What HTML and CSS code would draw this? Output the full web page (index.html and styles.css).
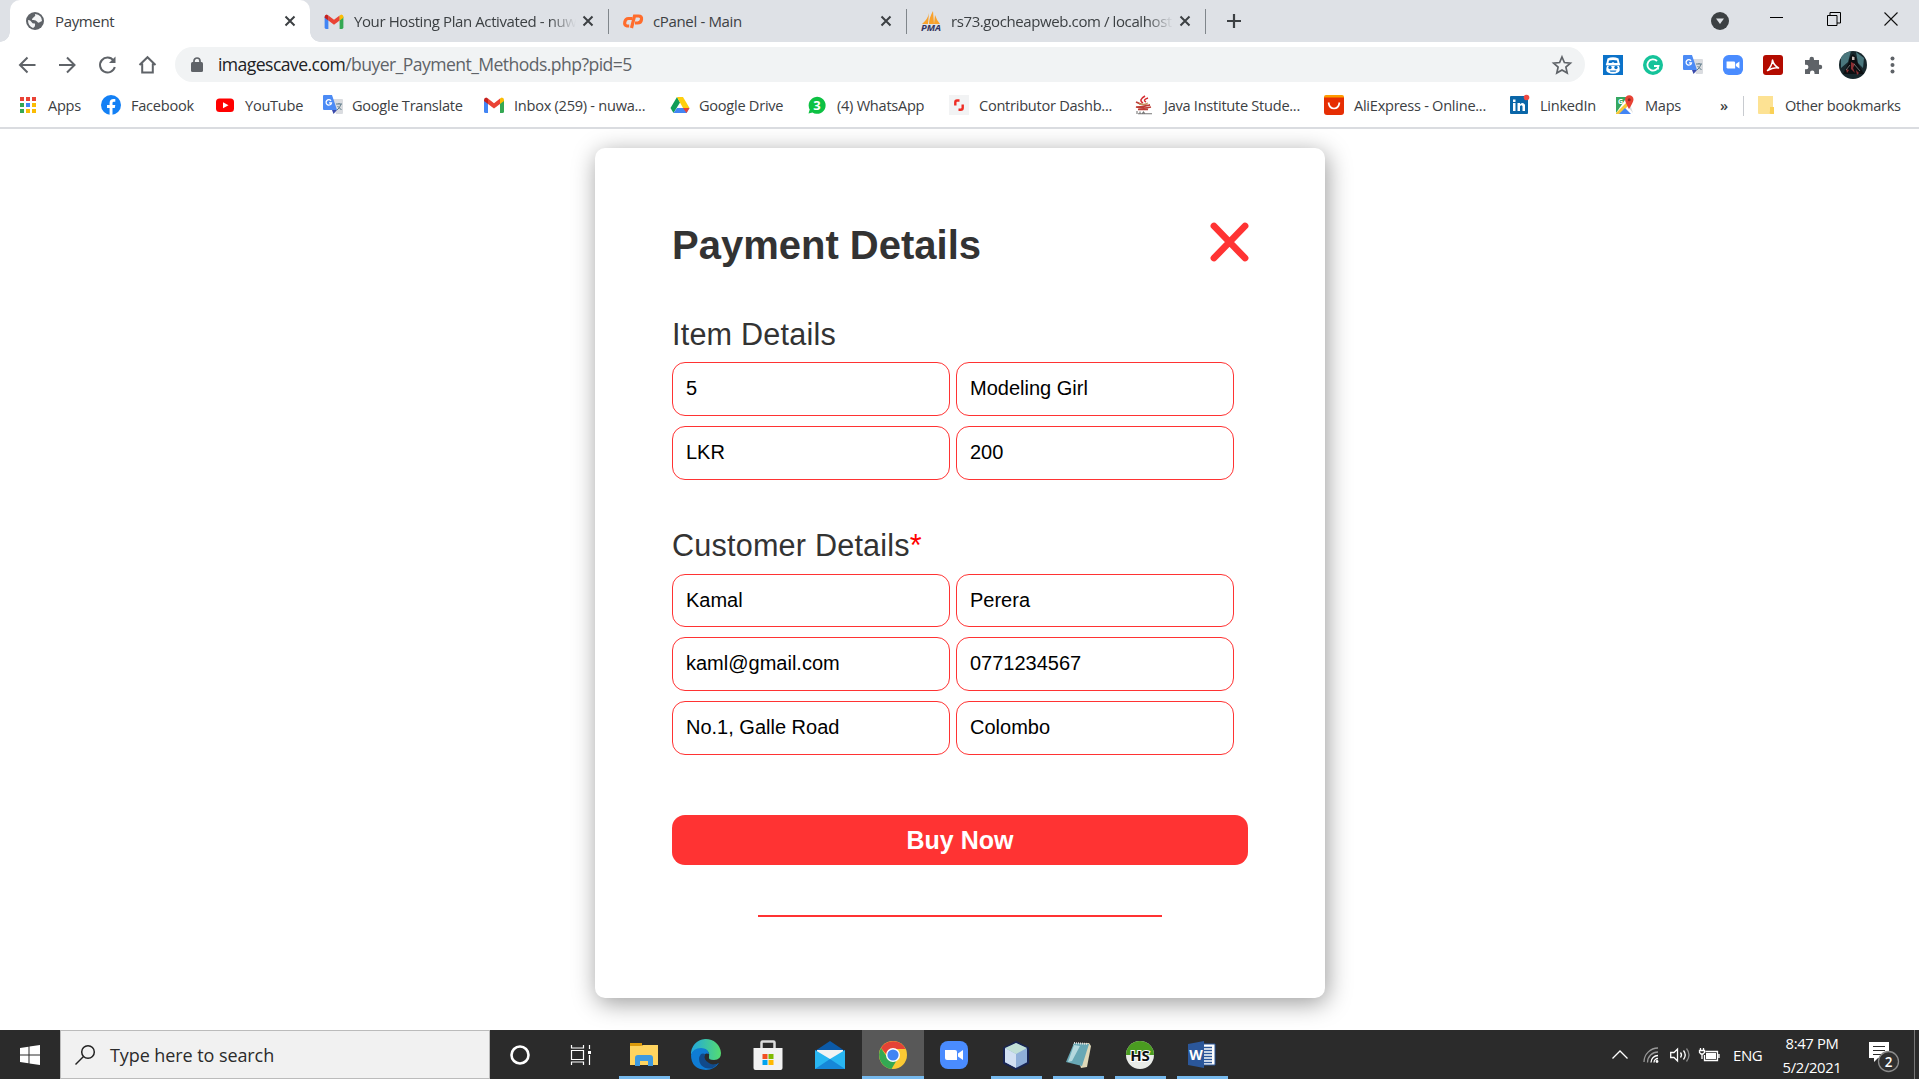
FILE: index.html
```html
<!DOCTYPE html>
<html lang="en">
<head>
<meta charset="utf-8">
<title>Payment</title>
<link rel="stylesheet" href="styles.css">
</head>
<body>
<svg class="defs" width="0" height="0" aria-hidden="true">
  <symbol id="x" viewBox="0 0 12 12"><path d="M1.500 1.500l9 9M10.500 1.500l-9 9" stroke="#3c4043" stroke-width="2" fill="none"/></symbol>
  <symbol id="gmail" viewBox="0 0 20 16"><path d="M0 3h4v13H1.500Q0 16 0 14.500z" fill="#4285f4"/><path d="M16 3h4v11.500Q20 16 18.500 16H16z" fill="#34a853"/><path d="M4 1.500l6 4.700 6-4.700v5.500l-6 4.500-6-4.500z" fill="#ea4335"/><path d="M0 3Q0 .5 2.200.4L4 1.500V7L0 4z" fill="#c5221f"/><path d="M20 3q0-2.500-2.200-2.600L16 1.500V7l4-3z" fill="#fbbc04"/></symbol>
  <symbol id="translate" viewBox="0 0 20 20"><path d="M8 4h11q1 0 1 1v13q0 1-1 1h-6z" fill="#dadce0"/><path d="M1 0h8l5 15H1q-1 0-1-1V1q0-1 1-1z" fill="#4c8bf5"/><path d="M9 15h5l-3.500 4z" fill="#3949ab"/><path d="M8 5.800A2.700 2.700 0 1 0 8.500 7.800H6" stroke="#fff" stroke-width="1.300" fill="none"/><path d="M13 9h6M16 8v1M18 9q-1 4-4 6M14.500 11l4 4" stroke="#607d8b" fill="none"/></symbol>
  <symbol id="zoom" viewBox="0 0 28 28"><rect width="28" height="28" rx="8" fill="#4a8cff"/><path d="M5 9h10q2 0 2 2v8H7q-2 0-2-2z" fill="#fff"/><path d="M18 12.500l5-3.500v10l-5-3.500z" fill="#fff"/></symbol>
</svg>
<div class="screen">
  <header class="tabs">
    <div class="tab active">
      <svg class="i18" viewBox="0 0 18 18"><circle cx="9" cy="9" r="9" fill="#5f6368"/><path d="M2 8q2.500 0 3.500 2t3.500 1.500Q9.500 15 7 16 2 14 2 8zM9 2q1 2-1 3T6 8q4-.5 5 1.500t3 .5l2-1Q16 3 9 2z" fill="#f4f5f6"/></svg>
      <span class="t-pay">Payment</span><svg class="x"><use href="#x"/></svg>
    </div>
    <div class="tab t2"><svg class="gm"><use href="#gmail"/></svg><span class="fade">Your Hosting Plan Activated - nuw</span><svg class="x"><use href="#x"/></svg></div>
    <div class="tab t3">
      <svg class="cp" viewBox="0 0 20 14"><g fill="none" stroke="#ff6c2c" stroke-width="3.200"><path d="M9.500 4.500H5.500Q2.500 4.500 1.800 8T4 12h2.200"/><path d="M8.500 14l3-12h4q3.500 0 3 3.500T14.500 9h-2.500"/></g></svg>
      <span>cPanel - Main</span><svg class="x"><use href="#x"/></svg></div>
    <div class="tab t4">
      <svg class="i20" viewBox="0 0 20 20"><path d="M8 2q-1 6-7 11h6zM12 0q-4 7-4 13h5zM14 4l-1 9h6q-3-3-5-9z" fill="#f9a12b"/><text class="pma" x="0" y="19.500" textLength="20" lengthAdjust="spacingAndGlyphs">PMA</text></svg>
      <span class="fade">rs73.gocheapweb.com / localhost</span><svg class="x"><use href="#x"/></svg></div>
    <svg class="plus" viewBox="0 0 16 16"><path d="M8 1v14M1 8h14" stroke="#3c4043" stroke-width="2.200"/></svg>
    <div class="winctl">
      <svg class="i18" viewBox="0 0 18 18"><circle cx="9" cy="9" r="9" fill="#3c4043"/><path d="M5 6.500h8L9 12z" fill="#dee1e6"/></svg>
      <svg class="w" viewBox="0 0 14 14"><path d="M0 5.500h13" stroke="#000"/></svg>
      <svg class="w" viewBox="0 0 14 14"><path d="M.5 3.500h9.500v10H.5zM3 3V.5h10.500V11H10" fill="none" stroke="#000"/></svg>
      <svg class="w" viewBox="0 0 14 14"><path d="M.5.5l13 13M13.500.5l-13 13" stroke="#111" stroke-width="1.100"/></svg>
    </div>
  </header>
  <nav class="toolbar">
    <svg class="nav" viewBox="0 0 20 20"><path d="M18.500 10H3M10.500 2.500L3 10l7.500 7.500" /></svg>
    <svg class="nav" viewBox="0 0 20 20"><path d="M2 10h15M10 2.500l7.500 7.500-7.500 7.500"/></svg>
    <svg class="nav" viewBox="0 0 20 20"><path d="M16.500 5.500A7.500 7.500 0 1 0 17.800 12"/><path d="M18.500 1.500V8H12z" fill="#5f6368" stroke="none"/></svg>
    <svg class="nav" viewBox="0 0 20 20"><path d="M2.500 10l8-7.800L18.500 10M5.200 8.500V17.500h10.600V8.500"/></svg>
    <div class="omni">
      <svg class="lock" viewBox="0 0 12 16"><rect y="5" width="12" height="10" rx="1.500" fill="#5f6368"/><path d="M3 6V4a3 3 0 0 1 6 0v2" fill="none" stroke="#5f6368" stroke-width="1.700"/></svg>
      <span class="url">imagescave.com<i>/buyer_Payment_Methods.php?pid=5</i></span>
      <svg class="star" viewBox="0 0 20 20"><path d="M10 2l2.400 5.500 6 .6-4.500 4 1.300 5.900L10 14.900 4.800 18l1.300-5.900-4.500-4 6-.6z"/></svg>
    </div>
    <div class="ext">
      <svg class="i20" viewBox="0 0 20 20"><rect width="20" height="20" fill="#0b72c9"/><path d="M4.500 3.500q5.500-2.500 11 0l1 4.500q1.500 1 0 2.500h-13q-1.500-1.500 0-2.500zM4 11h12q2 5-1 6.500-5 2.500-10 0-3-1.500-1-6.500z" fill="#fff"/><path d="M6 5.500q4-1 8 0l.5 2.500h-3L10 7 8.500 8h-3z" fill="#0b72c9"/><g fill="#0b72c9"><circle cx="7" cy="12.500" r="1.700"/><circle cx="13" cy="12.500" r="1.700"/><path d="M6.500 15.500h7l-1 1.200h-5z"/></g></svg>
      <svg class="i20" viewBox="0 0 20 20"><circle cx="10" cy="10" r="10" fill="#15c39a"/><path d="M14 6A5.600 5.600 0 1 0 15.500 11H11M15 11v3.500" fill="none" stroke="#fff" stroke-width="1.800"/></svg>
      <svg class="i20"><use href="#translate"/></svg>
      <svg class="i20"><use href="#zoom"/></svg>
      <svg class="i20" viewBox="0 0 20 20"><rect width="20" height="20" rx="3" fill="#b30b00"/><path d="M9.500 5q1 5 6 8-5-1-11 2.500Q9 11 9.500 5z" fill="none" stroke="#fff" stroke-width="1.500" stroke-linejoin="round"/></svg>
      <svg class="i20" viewBox="0 0 20 20"><path d="M2 5h4.500V4a2.200 2.200 0 0 1 4.500 0v1H16v4.800h1a2.200 2.200 0 0 1 0 4.500h-1V19h-4.500v-1.200a2.200 2.200 0 0 0-4.500 0V19H2v-4.800h1.200a2.200 2.200 0 0 0 0-4.500H2z" fill="#5f6368"/></svg>
      <svg class="ava" viewBox="0 0 28 28"><defs><clipPath id="av"><circle cx="14" cy="14" r="14"/></clipPath></defs><g clip-path="url(#av)"><path fill="#17272c" d="M0 0h28v28H0z"/><path fill="#4a777d" d="M2 3l10-3-3 11-7 6zM17 1l8 6-1 10-5-5z"/><path fill="#0c0f12" d="M14 3q4 3 4 8l7 12H4l6-12q0-5 4-8z"/><path fill="#c9bdb8" d="M13 5.500l2.500.5v3L13 9z"/><path fill="#8b2f33" d="M12 11l4 2-2 4 2 5-4-4zM7 18l3 1-2 3zM17 19l3 3-2 2z"/><path stroke="#7f8687" stroke-width=".8" d="M15 13l6 7M11 14l-4 5"/></g></svg>
      <svg class="dots" viewBox="0 0 5 18"><g fill="#5f6368"><circle cx="2.500" cy="2.500" r="2"/><circle cx="2.500" cy="9" r="2"/><circle cx="2.500" cy="15.500" r="2"/></g></svg>
    </div>
  </nav>
  <nav class="marks">
    <a class="m1"><svg viewBox="0 0 20 20"><g fill="#ea4335"><path d="M2 2h4v4H2zM8 2h4v4H8zM14 2h4v4h-4z"/></g><path fill="#34a853" d="M2 8h4v4H2zM2 14h4v4H2z"/><path fill="#4285f4" d="M8 8h4v4H8z"/><path fill="#fbbc04" d="M14 8h4v4h-4zM8 14h4v4H8zM14 14h4v4h-4z"/></svg><span>Apps</span></a>
    <a class="m2"><svg viewBox="0 0 20 20"><circle cx="10" cy="10" r="10" fill="#1380f5"/><path d="M8.600 20v-7H6v-3h2.600V8q0-4 4-4h1.700v2.700h-1.500Q11.500 6.700 11.500 8v2h2.800l-.5 3h-2.300v7z" fill="#fff"/></svg><span>Facebook</span></a>
    <a class="m3"><svg viewBox="0 0 20 20"><rect x="1" y="3.500" width="18" height="13.500" rx="3.500" fill="#f00"/><path d="M8 7.300l5.500 3L8 13.200z" fill="#fff"/></svg><span>YouTube</span></a>
    <a class="m4"><svg><use href="#translate"/></svg><span>Google Translate</span></a>
    <a class="m5"><svg><use href="#gmail"/></svg><span>Inbox (259) - nuwa...</span></a>
    <a class="m6"><svg viewBox="0 0 20 20"><path d="M7 2L.5 13l3 5L10 7.500z" fill="#109d58"/><path d="M7 2h6l6.500 11H13z" fill="#ffcf0f"/><path d="M7 13h12.500l-3 5h-13z" fill="#4285f4"/><path d="M13 13h6.500l-3 5z" fill="#ea4335"/></svg><span>Google Drive</span></a>
    <a class="m7"><svg viewBox="0 0 20 20"><path d="M1.500 18.500l1.200-4A8.500 8.500 0 1 1 5.500 17.500z" fill="#0dc143"/><text x="6.300" y="14.500" font-size="13" font-weight="700" fill="#fff">3</text></svg><span>(4) WhatsApp</span></a>
    <a class="m8"><svg viewBox="0 0 20 20"><path fill="#f2f3f4" d="M0 0h20v20H0z"/><path d="M10.500 5.500H8Q6.300 5.500 6.300 7.500v3M9.500 14.800h2.200q2 0 2-2V9.500" fill="none" stroke="#ee2c24" stroke-width="2.400"/></svg><span>Contributor Dashb...</span></a>
    <a class="m9"><svg viewBox="0 0 20 20"><path d="M11 1Q4 5 9 8M14 3q-6 2-2 4" stroke="#d52c30" stroke-width="1.500" fill="none"/><path d="M2 7q7 4 14 3-6 2-14 2 8 2 15 0M4 14.500h10" stroke="#bd3c34" fill="none" stroke-width="1.500"/><path d="M5 9q5 1 9-1" stroke="#c29a5b" stroke-width="1.300" fill="none"/><path d="M3 16v3M6 16.500v2.500M8 19l1.500-2 1.500 2M4 18.800h14" stroke="#777" stroke-width="1.100" fill="none"/></svg><span>Java Institute Stude...</span></a>
    <a class="m10"><svg viewBox="0 0 20 20"><path d="M2 0h16q2 0 2 2v3H0V2q0-2 2-2z" fill="#ff9b00"/><path d="M0 2.500h20V17q0 3-3 3H3q-3 0-3-3z" fill="#e62e04"/><path d="M4.500 7.500q1 6 5.500 6t5.500-6" stroke="#fff" stroke-width="1.700" fill="none"/></svg><span>AliExpress - Online...</span></a>
    <a class="m11"><svg viewBox="0 0 20 20"><rect x="0" y="1" width="18" height="18" rx="1" fill="#0a66a8"/><path d="M3 8h2.500v8H3zM3 4.500h2.500V7H3zM7.500 8H10v1.200q3-2.500 5 .5V16h-2.500v-4.700q-1-2-2.500 0V16H7.500z" fill="#fff"/><circle cx="16.500" cy="2.500" r="2.800" fill="#ef4a43"/></svg><span>LinkedIn</span></a>
    <a class="m12"><svg viewBox="0 0 20 20"><path fill="#35a760" d="M1 2h11L1 18z"/><path fill="#f7c837" d="M1 18L13 6l2 3-10 10H1z"/><path fill="#4285f4" d="M4 19l6-6 6 6z"/><path fill="#ddd" d="M12 11l3-2 3 9z"/><path d="M14 14Q10 7 10 4.500a4 4 0 0 1 8.500 0Q18.500 7 14 14z" fill="#e84234"/><circle cx="14.200" cy="4.700" r="1.500" fill="#98251e"/><text x="3" y="9" font-size="7" font-weight="700" fill="#fff">G</text></svg><span>Maps</span></a>
    <a class="more"><span>»</span></a>
    <a class="m13"><svg viewBox="0 0 20 20"><path d="M3 1h15v11h1v7H4q-1 0-1-1z" fill="#fde293"/><path d="M15 12h4v7h-3q-2 0-1-3z" fill="#fad157"/></svg><span>Other bookmarks</span></a>
  </nav>
  <main>
    <form class="card">
      <div class="head"><h1>Payment Details</h1><svg class="close" viewBox="0 0 37 38"><path d="M3 3l31 32M34 3L3 35" stroke="#f33" stroke-width="6.800" stroke-linecap="round"/></svg></div>
      <h2 class="item">Item Details</h2>
      <div class="grid"><div class="field">5</div><div class="field">Modeling Girl</div><div class="field">LKR</div><div class="field">200</div></div>
      <h2 class="cust">Customer Details<b>*</b></h2>
      <div class="grid people"><div class="field">Kamal</div><div class="field">Perera</div><div class="field">kaml@gmail.com</div><div class="field">0771234567</div><div class="field">No.1, Galle Road</div><div class="field">Colombo</div></div>
      <button type="button" class="buy">Buy Now</button>
      <div class="rule"></div>
    </form>
  </main>
  <footer class="taskbar">
    <div class="start"><svg class="i20" viewBox="0 0 20 20"><path d="M0 3l8.500-1.300v7.800H0zM9.500 1.500L20 0v9.500H9.500zM0 10.500h8.500v7.800L0 17zM9.500 10.500H20V20L9.500 18.500z" fill="#fff"/></svg></div>
    <div class="search"><svg viewBox="0 0 20 20"><circle cx="13" cy="7" r="6.300"/><path d="M8.500 11.500L.5 19.500"/></svg><span>Type here to search</span></div>
    <div class="task"><svg viewBox="0 0 30 30"><circle cx="15" cy="15" r="8.500" fill="none" stroke="#fff" stroke-width="2.600"/></svg></div>
    <div class="task tv"><svg viewBox="0 0 30 30"><path d="M5.500 10.500h12v9h-12zM5.500 5v3h12V5M5.500 25v-3h12v3M23.500 5v4M23.500 15v10" fill="none" stroke="#fff" stroke-width="1.200"/><path d="M22 11h3v3h-3z" fill="#fff"/></svg></div>
    <div class="task on"><svg viewBox="0 0 30 30"><path d="M1 3h12v4H1z" fill="#dc9a0a"/><path d="M1 6h11l2-1h15v20H1z" fill="#ffd45f"/><path d="M6 26V18q0-3 3-3h12q3 0 3 3v8h-5v-5h-8v5z" fill="#3e9ae0"/></svg></div>
    <div class="task"><svg viewBox="0 0 30 30"><defs><linearGradient id="eg"><stop stop-color="#21a7df"/><stop offset="1" stop-color="#55dc70"/></linearGradient></defs><path d="M0 15A15 15 0 0 1 30 13q0 7-7 7-6 0-5-3 1-8-7-8Q2 9 0 15z" fill="url(#eg)"/><path d="M0 15Q2 8 10 8q7 0 8 6-5-2-5 4 1 7 9 7 3 0 6-2-5 7-13 7Q0 29 0 15z" fill="#0f7cd4"/><path d="M10 14q-4 5 0 11 5 5 12 3l6-5q-6 3-10 0-6-3-4-9-2-1-4 0z" fill="#114a8b"/></svg></div>
    <div class="task"><svg viewBox="0 0 30 30"><path d="M8.500 9V2.500q0-1 1-1h11q1 0 1 1V9" fill="none" stroke="#ddd" stroke-width="2.500"/><path d="M.5 8h29v20q0 2-2 2h-25q-2 0-2-2z" fill="#f2f2f2"/><path fill="#f25022" d="M9.500 14h5v5h-5z"/><path fill="#7fba00" d="M15.500 14h5v5h-5z"/><path fill="#00a4ef" d="M9.500 20h5v5h-5z"/><path fill="#ffb900" d="M15.500 20h5v5h-5z"/></svg></div>
    <div class="task"><svg viewBox="0 0 30 30"><path d="M0 11L15 1l15 10z" fill="#0b5aa8"/><path d="M2 10h26v9H2z" fill="#f3f3f3"/><path d="M0 10l15 9 15-9v19H0z" fill="#29b6f2"/><path d="M0 29l15-10 15 10z" fill="#1687d9"/></svg></div>
    <div class="task on cur"><svg viewBox="0 0 30 30"><circle cx="15" cy="15" r="14" fill="#fbc934"/><path d="M3 8A14 14 0 0 1 27.500 9H15q-5 0-6 6z" fill="#e44336"/><path d="M3 8A14 14 0 0 0 13.500 29L20 18q-6 5-11-1z" fill="#34a853"/><circle cx="15" cy="15" r="7" fill="#fff"/><circle cx="15" cy="15" r="5.600" fill="#4285f4"/></svg></div>
    <div class="task"><svg viewBox="-1 -1 30 30"><use href="#zoom" width="28" height="28"/></svg></div>
    <div class="task on"><svg viewBox="0 0 30 30"><path d="M15 2l12 6v15l-12 6-12-6V8z" fill="#8fafd9" stroke="#182451" stroke-width="2"/><path d="M4 8l11 6v14L4 22z" fill="#d2e0f3"/><path d="M15 3l11 5-11 6L4 8z" fill="#c1dfd7"/></svg></div>
    <div class="task on"><svg viewBox="0 0 30 30"><path d="M10 4l16-1 2 3-4 21-6 1z" fill="#ded8b8"/><path d="M11 3l15 1-7 22L3 22z" fill="#68a8b5"/><path d="M11 5l6 1-8 15-4 1z" fill="#b4d9de"/><path d="M11 3l14 1" stroke="#ddd" stroke-width="2" stroke-dasharray="1 1"/></svg></div>
    <div class="task on"><svg viewBox="0 0 30 30"><circle cx="15" cy="15" r="14" fill="#e9ece8"/><path d="M1 15a14 14 0 0 1 28 0z" fill="#4a9c20"/><text x="15" y="20.500" font-size="15" font-weight="700" text-anchor="middle" class="hs">HS</text></svg></div>
    <div class="task on"><svg viewBox="0 0 30 30"><path d="M16 4h12v21H16z" fill="#fff" stroke="#2b579a"/><path d="M17 7.500h8M17 10.500h8M17 13.500h8M17 16.500h8M17 19.500h8M17 22.500h8" stroke="#2b579a" stroke-width="1.400"/><path d="M1 4l16-3v27L1 25z" fill="#2b579a"/><text x="9" y="20" font-size="14" font-weight="700" text-anchor="middle" fill="#fff">W</text></svg></div>
    <div class="tray">
      <svg class="chev" viewBox="0 0 16 9"><path d="M.5 8.500L8 1l7.500 7.500"/></svg>
      <svg class="wifi" viewBox="0 0 16 16"><g stroke="#999"><path d="M1 15A14 14 0 0 1 15 1"/><path d="M4.500 15.500A10.500 10.500 0 0 1 15 5"/></g><path d="M8 15.500A7 7 0 0 1 15 8.500M11 15.500a4 4 0 0 1 4-4"/><circle cx="14" cy="14.500" r="1.400" fill="#fff" stroke="none"/></svg>
      <svg class="spk" viewBox="0 0 21 16"><path d="M.7 5.500H4L7.500 2v12L4 10.500H.7zM10.500 5.500q2 2.500 0 5M13.500 3.500q3.500 4.500 0 9"/><path d="M16.500 1.500q5 6.500 0 13" stroke="#888"/></svg>
      <svg class="bat" viewBox="0 0 21 14"><path d="M6.500 3.500h12v9h-13V7M20 6v4M1.500 0v2M4.500 0v2M.5 2.500h5v2l-1.500 1.500h-2L.5 4.500zM3 6v5"/><path d="M7 5h10v6H7z" fill="#fff" stroke="none"/></svg>
      <span class="eng">ENG</span>
      <div class="clock"><span>8:47 PM</span><span>5/2/2021</span></div>
      <svg class="note" viewBox="0 0 32 32"><path d="M0 1h20v16H9l-4 4v-4H0z" fill="#fff" stroke="none"/><path d="M4 5.500h12M4 9.500h12M4 13.500h8" stroke="#2b2b2b" stroke-width="1.200"/><circle cx="19.500" cy="20.500" r="10" fill="#303030" stroke="#8b8b8b"/><text x="19.500" y="25.500" font-size="13.500" font-weight="600" text-anchor="middle" fill="#fff">2</text></svg>
      <i class="peek"></i>
    </div>
  </footer>
</div>
</body>
</html>
```
FILE: styles.css
```css
*{box-sizing:border-box}
body{margin:0;background:#fff;overflow:hidden;font-family:"Open Sans","Noto Sans",sans-serif;color:#3c4043}
svg{display:block;flex:none;overflow:visible}
.defs{position:absolute}
.screen{width:1919px;height:1079px;display:flex;flex-direction:column}
span{white-space:nowrap}
.i18{width:18px;height:18px}
.i20{width:20px;height:20px}

/* Tab strip */
.tabs{height:42px;flex:none;background:#dee1e6;display:flex;align-items:center;font-size:15px;letter-spacing:-.35px}
.tab{height:42px;display:flex;align-items:center}
.tab .x{width:12px;height:12px;margin-left:auto}
.tab span{margin:-1px 0 0 10px}
.active{position:relative;width:300px;margin-left:10px;padding:0 14px 0 16px;background:#fff;border-radius:10px 10px 0 0}
.active::before,.active::after{content:"";position:absolute;bottom:0;width:10px;height:10px}
.active::before{left:-10px;background:radial-gradient(circle at 0 0,#dee1e6 9.5px,#fff 10px)}
.active::after{right:-10px;background:radial-gradient(circle at 100% 0,#dee1e6 9.5px,#fff 10px)}
.active .t-pay{margin-left:11px}
.t2::after,.t3::after,.t4::after{content:"";width:1px;height:25px;background:#80868b;margin-left:14px}
.t2{width:299px;padding-left:14px}
.t3{width:298px;padding-left:14px}
.t4{width:299px;padding-left:14px}
.gm{width:20px;height:15px}
.cp{width:20px;height:14px}
.tab .fade{width:222px;-webkit-mask-image:linear-gradient(90deg,#000 195px,transparent 222px);mask-image:linear-gradient(90deg,#000 195px,transparent 222px);letter-spacing:-.4px}
.pma{font:italic 700 8px "Open Sans",sans-serif;letter-spacing:0;fill:#33345f}
.plus{width:16px;height:16px;margin-left:20px}
.winctl{display:flex;align-items:center;margin-left:auto;padding-right:21px}
.winctl .w{width:14px;height:14px;margin:-5px 0 0 43px}
.winctl .w:nth-child(2){margin-left:41px}

/* Navigation bar */
.toolbar{height:45px;flex:none;display:flex;align-items:center;padding-left:17px}
.nav{width:20px;height:20px;margin-right:20px;fill:none;stroke:#5f6368;stroke-width:2}
.omni{width:1410px;height:35px;margin-left:-2px;border-radius:18px;background:#f1f3f4;display:flex;align-items:center;padding:0 13px 0 16px}
.lock{width:12px;height:16px}
.url{margin-left:15px;font-size:17.600px;letter-spacing:-.57px;color:#202124;margin-top:-1px}
.url i{font-style:normal;color:#5f6368}
.star{width:20px;height:20px;margin-left:auto;fill:none;stroke:#5f6368;stroke-width:1.700}
.ext{display:flex;align-items:center;gap:20px;margin-left:18px}
.ava{width:28px;height:28px;margin-left:-4px}
.dots{width:5px;height:18px;margin-left:3px}

/* Bookmarks */
.marks{height:42px;flex:none;border-bottom:2px solid #dadce0;display:flex;padding:0 0 4px 18px;font-size:14.600px;letter-spacing:-.27px;line-height:20px}
.marks a{display:flex;align-items:center;gap:10px}
.marks svg{width:20px;height:20px}
.marks text{letter-spacing:0}
.m1{width:83px}.m2{width:114px}.m3{width:108px}.m4{width:161px}.m5{width:186px}.m6{width:137px}.m7{width:142px}.m8{width:185px}.m9{width:190px}.m10{width:186px}.m11{width:105px}.m12{width:105px}
.marks .m4,.marks .m6{gap:9px}
.marks .m5 svg{height:16px}
.more{width:23px;font-weight:600}
.m13{padding-left:12px;position:relative}
.m13::before{content:"";position:absolute;left:0;top:9px;width:1px;height:20px;background:#c8cbd0}

/* Page */
main{height:901px;flex:none;padding:19px 0 0 595px;overflow:hidden;font-family:"Liberation Sans",Arial,sans-serif}
.card{width:730px;height:850px;padding:74px 77px 0;border-radius:10px;background:#fff;box-shadow:2px 5px 25px rgba(0,0,0,.4);color:#333}
.head{height:76px;display:flex;justify-content:space-between}
h1{margin:0;font-size:40px;line-height:46px}
.close{width:37px;height:38px;margin-top:1px}
h2{margin:0;font-weight:400;font-size:30.600px;line-height:34px;letter-spacing:.2px}
h2 b{font-weight:400;color:red}
.item{padding-top:19px;height:64px}
.grid{display:grid;grid-template-columns:278px 278px;grid-auto-rows:54px;gap:10px 6px}
.people{grid-template-rows:53px}
.field{border:1px solid #f33;border-radius:13px;padding:0 13px;font-size:20px;line-height:51px;color:#000}
.cust{padding-top:48px;height:94px}
.buy{display:block;width:576px;height:50px;margin:60px 0 0;border:0;border-radius:13px;background:#f33;color:#fff;font:700 25px/50px "Liberation Sans",Arial,sans-serif;padding:0}
.rule{width:404px;height:2px;margin:50px 0 0 86px;background:#f33}

/* Taskbar */
.taskbar{height:49px;flex:none;background:#2b2b2b;display:flex;color:#fff}
.start{width:60px;padding:15px 0 0 20px}
.search{width:430px;border:1px solid #bbb;background:#f1f1f1;display:flex;align-items:center;padding-left:14px;font-size:18px;letter-spacing:-.08px;color:#2b2b2b}
.search svg{width:20px;height:20px;fill:none;stroke:#222;stroke-width:1.500}
.search span{margin-left:15px}
.task{width:62px;height:49px;display:flex;align-items:center;justify-content:center;position:relative;padding-right:2px}
.tv{padding-right:5px}
.task svg{width:30px;height:30px}
.hs{fill:#111;stroke:#fff;stroke-width:2px;paint-order:stroke}
.on::after{content:"";position:absolute;bottom:0;left:5px;right:6px;height:3px;background:#76b9ed}
.cur{background:#585858;padding:0}
.cur::after{left:0;right:0}
.tray{display:flex;align-items:center;margin-left:auto;padding-right:4px}
.tray svg{fill:none;stroke:#fff;stroke-width:1.300}
.tray text{stroke:none}
.chev{width:16px;height:9px}
.wifi{width:16px;height:16px;margin-left:15px}
.spk{width:21px;height:16px;margin-left:11px}
.bat{width:21px;height:14px;margin-left:8px}
.eng{font-size:15px;letter-spacing:-.4px;margin-left:13px;width:29px}
.clock{display:flex;flex-direction:column;align-items:center;width:60px;margin-left:20px;font-size:14.800px;letter-spacing:-.35px;line-height:24px}
.note{width:32px;height:32px;margin:4px 0 0 27px}
.peek{width:1px;height:49px;background:#777;margin-left:13px}
```
